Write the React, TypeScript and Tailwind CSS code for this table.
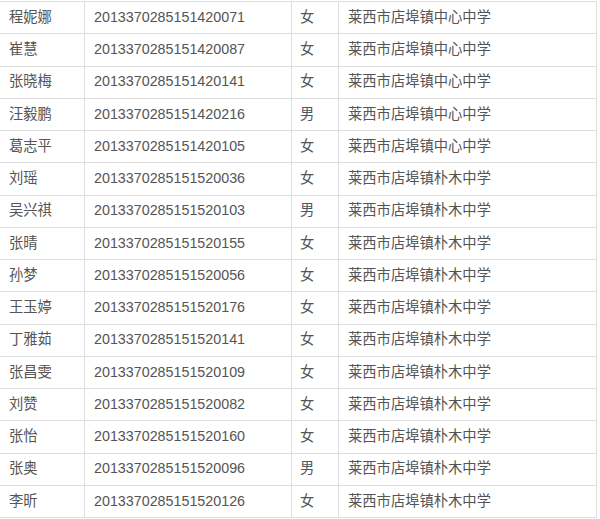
const rows: [string, string, string, string][] = [
  ['程妮娜', '2013370285151420071', '女', '莱西市店埠镇中心中学'],
  ['崔慧', '2013370285151420087', '女', '莱西市店埠镇中心中学'],
  ['张晓梅', '2013370285151420141', '女', '莱西市店埠镇中心中学'],
  ['汪毅鹏', '2013370285151420216', '男', '莱西市店埠镇中心中学'],
  ['葛志平', '2013370285151420105', '女', '莱西市店埠镇中心中学'],
  ['刘瑶', '2013370285151520036', '女', '莱西市店埠镇朴木中学'],
  ['吴兴祺', '2013370285151520103', '男', '莱西市店埠镇朴木中学'],
  ['张晴', '2013370285151520155', '女', '莱西市店埠镇朴木中学'],
  ['孙梦', '2013370285151520056', '女', '莱西市店埠镇朴木中学'],
  ['王玉婷', '2013370285151520176', '女', '莱西市店埠镇朴木中学'],
  ['丁雅茹', '2013370285151520141', '女', '莱西市店埠镇朴木中学'],
  ['张昌雯', '2013370285151520109', '女', '莱西市店埠镇朴木中学'],
  ['刘赞', '2013370285151520082', '女', '莱西市店埠镇朴木中学'],
  ['张怡', '2013370285151520160', '女', '莱西市店埠镇朴木中学'],
  ['张奥', '2013370285151520096', '男', '莱西市店埠镇朴木中学'],
  ['李昕', '2013370285151520126', '女', '莱西市店埠镇朴木中学'],
]

export default function App() {
  return (
    <div className="w-[600px] h-[519px] overflow-hidden bg-white pt-px font-['Liberation_Sans','Noto_Sans_CJK_SC',sans-serif] text-[14.3px] text-[#555]">
      <div className="w-[597px] border-t border-[#dedede]">
        {rows.map((r) => (
          <div key={r[1] + r[0]} className="grid h-[32.25px] grid-cols-[85px_207px_47px_258px] border-b border-[#dedede]">
            {r.map((c, i) => (
              <div key={i} className={'flex items-center border-r border-[#dedede] ' + (i === 2 ? 'pl-[8px]' : 'pl-[9px]')}>
                {c}
              </div>
            ))}
          </div>
        ))}
      </div>
    </div>
  )
}
